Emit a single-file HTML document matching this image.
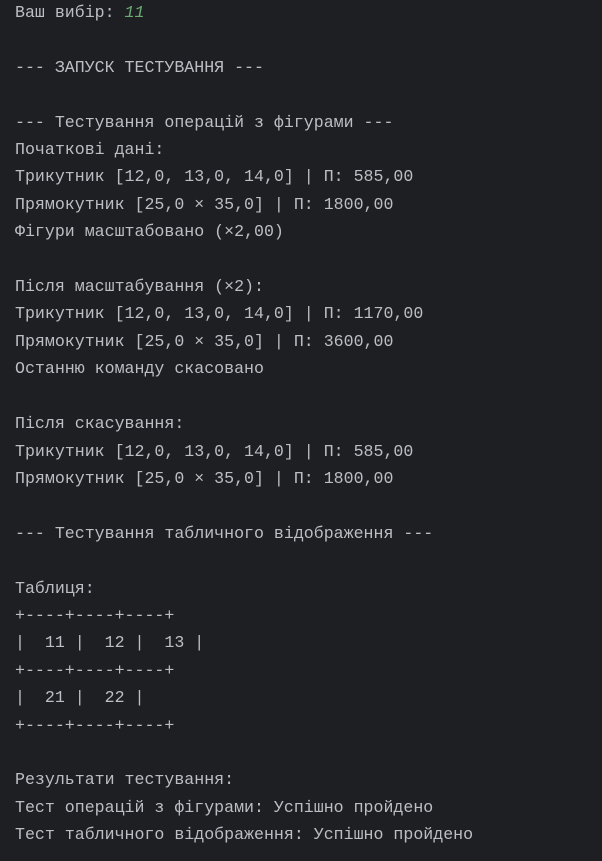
<!DOCTYPE html>
<html><head><meta charset="utf-8"><style>
html,body{margin:0;padding:0;background:#1e1f22;width:602px;height:861px;overflow:hidden}
pre{margin:0;position:absolute;left:15px;top:-1px;font-family:"Liberation Mono","DejaVu Sans Mono",monospace;font-size:16.6px;line-height:27.4px;color:#bcbec4;white-space:pre}
.g{color:#6aab73;font-style:italic}
</style></head><body><pre>Ваш вибір: <span class="g">11</span>

--- ЗАПУСК ТЕСТУВАННЯ ---

--- Тестування операцій з фігурами ---
Початкові дані:
Трикутник [12,0, 13,0, 14,0] | П: 585,00
Прямокутник [25,0 × 35,0] | П: 1800,00
Фігури масштабовано (×2,00)

Після масштабування (×2):
Трикутник [12,0, 13,0, 14,0] | П: 1170,00
Прямокутник [25,0 × 35,0] | П: 3600,00
Останню команду скасовано

Після скасування:
Трикутник [12,0, 13,0, 14,0] | П: 585,00
Прямокутник [25,0 × 35,0] | П: 1800,00

--- Тестування табличного відображення ---

Таблиця:
+----+----+----+
|  11 |  12 |  13 |
+----+----+----+
|  21 |  22 |
+----+----+----+

Результати тестування:
Тест операцій з фігурами: Успішно пройдено
Тест табличного відображення: Успішно пройдено</pre></body></html>
